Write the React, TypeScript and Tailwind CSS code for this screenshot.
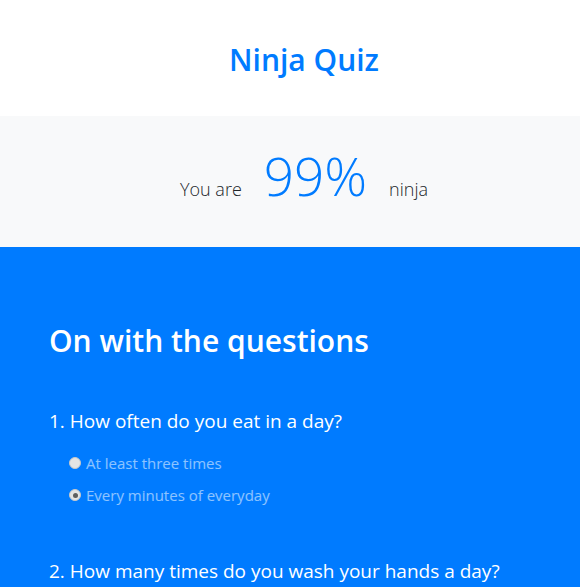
import React from "react";

function Radio({ checked }: { checked?: boolean }) {
  return (
    <span className="w-[12px] h-[12px] rounded-full bg-[#e4e4e4] border border-[#c8c8c8] flex items-center justify-center shrink-0">
      {checked && <span className="w-[5px] h-[5px] rounded-full bg-[#5f5f5f]" />}
    </span>
  );
}

export default function App() {
  const font = { fontFamily: '"Open Sans", "Noto Sans", sans-serif' };
  return (
    <div className="w-[580px] h-[587px] overflow-hidden bg-white" style={font}>
      <header className="h-[116px] flex items-center justify-center pl-[28px]">
        <h1 className="text-[30px] font-semibold text-[#007bff] leading-none pt-[4px]">Ninja Quiz</h1>
      </header>
      <section className="h-[131px] bg-[#f8f9fa] flex items-center justify-center pl-[28px]">
        <div className="flex items-baseline gap-[22px] text-[#212529] pb-[12px]">
          <span className="text-[18px] font-light">You are</span>
          <span className="text-[53px] font-light text-[#007bff] leading-none">99%</span>
          <span className="text-[18px] font-light">ninja</span>
        </div>
      </section>
      <section className="bg-[#007bff] text-white px-[49px] pt-[76px] h-[340px]">
        <h2 className="text-[30px] font-semibold leading-[36px]">On with the questions</h2>
        <div className="mt-[50px]">
          <p className="text-[19px] leading-[24px]">1. How often do you eat in a day?</p>
          <div className="mt-[18px] pl-[20px] flex flex-col gap-[8px] text-[15px] text-white/55">
            <label className="flex items-center gap-[5px] leading-[24px]">
              <Radio />
              <span>At least three times</span>
            </label>
            <label className="flex items-center gap-[5px] leading-[24px]">
              <Radio checked />
              <span>Every minutes of everyday</span>
            </label>
          </div>
        </div>
        <div className="mt-[52px]">
          <p className="text-[19px] leading-[24px]">2. How many times do you wash your hands a day?</p>
        </div>
      </section>
    </div>
  );
}
